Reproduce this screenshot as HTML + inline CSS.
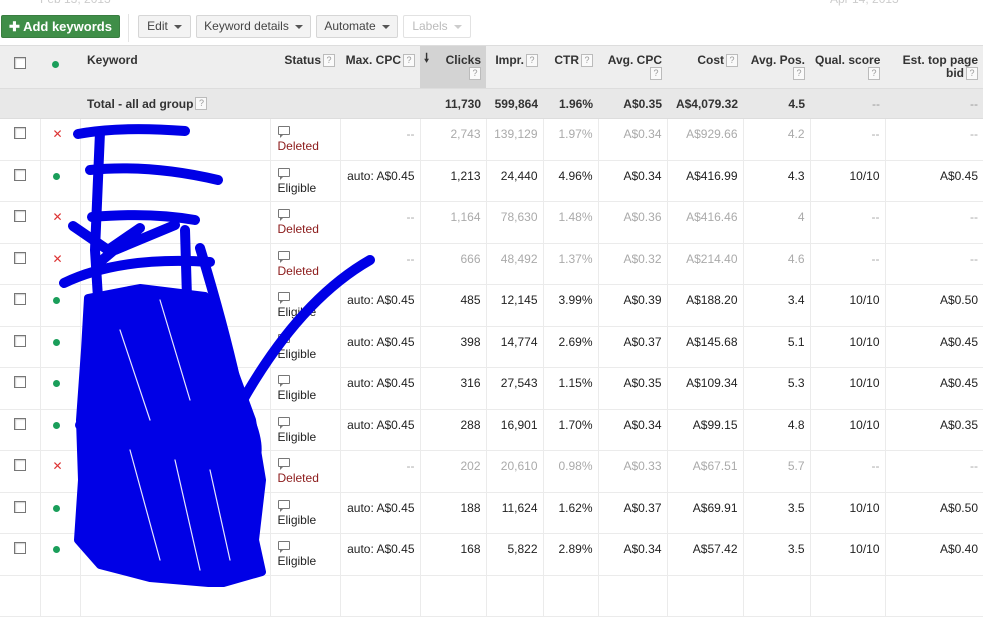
<!DOCTYPE html>
<html><head><meta charset="utf-8"><style>
body{margin:0;width:987px;height:587px;overflow:hidden;background:#fff;font-family:"Liberation Sans",Arial,sans-serif;font-size:12px;color:#222;position:relative}
.date{position:absolute;top:-8px;color:#ccc;font-size:12px}
.btn{position:absolute;top:15px;height:23px;border:1px solid #d6d6d6;border-radius:2px;background:#f3f3f3;line-height:21px;font-size:12px;color:#444;box-sizing:border-box;padding:0 10px;white-space:nowrap;text-align:center}
.caret{display:inline-block;width:0;height:0;border-left:4px solid transparent;border-right:4px solid transparent;border-top:4px solid #555;margin-left:6px;vertical-align:middle}
table{position:absolute;left:0;top:45px;border-collapse:collapse;table-layout:fixed;width:983px}
td,th{padding:0 5px;overflow:hidden;white-space:nowrap;box-sizing:border-box}
th{background:#eee;font-weight:bold;color:#333;vertical-align:top;padding-top:8px;height:43px;text-align:right;font-size:12px;line-height:13px;border-top:1px solid #ddd}
.q{display:inline-block;width:10px;height:11px;border:1px solid #bbb;background:#fafafa;color:#999;font-size:9px;line-height:11px;text-align:center;font-weight:normal;vertical-align:top;margin-left:2px}
tr.tot td{background:#e8e8e8;font-weight:bold;height:30px;text-align:right;border-top:1px solid #ddd;border-bottom:1px solid #ddd;color:#333}
tr.r td{height:41.5px;border-bottom:1px solid #ebebeb;border-left:1px solid #ebebeb;text-align:right;vertical-align:top;padding-top:8px}
tr.r td:first-child{border-left:none}
tr.d td{color:#aaa}
.cb{display:inline-block;width:10px;height:10px;border:1px solid #777;background:#fff;box-shadow:inset 1px 1px 1px #ccc}
.dot{display:inline-block;width:7px;height:7px;border-radius:50%;background:#1a9e5a}
.x{color:#d33;font-size:12px}
.st{text-align:left!important;padding-top:5px!important;line-height:15px;font-size:12px;padding-left:7px!important}
.bub{display:inline-block;width:10px;height:7px;border:1px solid #777;border-radius:1px;position:relative}
.bub:after{content:"";position:absolute;left:1px;bottom:-4px;width:0;height:0;border-left:3px solid #777;border-bottom:3px solid transparent}
.del{color:#8b1a1a}
.el{color:#222}
.c2{text-align:left!important;padding-left:12px!important}
</style></head><body>
<div class="date" style="left:40px">Feb 13, 2013</div>
<div class="date" style="left:830px">Apr 14, 2013</div>
<div class="btn" style="left:1px;width:119px;background:#3f8e48;border-color:#3a7d41;color:#fff;font-weight:bold;font-size:13px;padding:0">✚ Add keywords</div>
<div style="position:absolute;left:128px;top:14px;width:1px;height:28px;background:#e4e4e4"></div>
<div class="btn" style="left:138px;width:53px;padding:0">Edit<span class="caret"></span></div>
<div class="btn" style="left:196px;width:115px;padding:0">Keyword details<span class="caret"></span></div>
<div class="btn" style="left:316px;width:82px;padding:0">Automate<span class="caret"></span></div>
<div class="btn" style="left:403px;width:68px;background:#fff;color:#bbb;border-color:#e2e2e2;padding:0">Labels<span class="caret" style="border-top-color:#ccc"></span></div>
<table>
<colgroup><col style="width:40px"><col style="width:40px"><col style="width:190px"><col style="width:70px"><col style="width:80px"><col style="width:66px"><col style="width:57px"><col style="width:55px"><col style="width:69px"><col style="width:76px"><col style="width:67px"><col style="width:75px"><col style="width:98px"></colgroup>
<tr><th style="text-align:center;padding-top:11px"><span class="cb"></span></th><th class="c2" style="padding-top:12px"><span class="dot"></span></th><th style="text-align:left;padding-left:7px">Keyword</th><th>Status<span class="q">?</span></th><th>Max. CPC<span class="q">?</span></th><th style="background:#d3d3d3;position:relative"><span style="position:absolute;left:4px;top:6px">🠗</span>Clicks<br><span class="q">?</span></th><th>Impr.<span class="q">?</span></th><th>CTR<span class="q">?</span></th><th>Avg. CPC<br><span class="q">?</span></th><th>Cost<span class="q">?</span></th><th>Avg. Pos.<br><span class="q">?</span></th><th>Qual. score<br><span class="q">?</span></th><th>Est. top page<br>bid<span class="q">?</span></th></tr>
<tr class="tot"><td></td><td></td><td style="text-align:left;padding-left:7px">Total - all ad group<span class="q">?</span></td><td></td><td></td><td>11,730</td><td>599,864</td><td>1.96%</td><td>A$0.35</td><td>A$4,079.32</td><td>4.5</td><td style="font-weight:normal;color:#999">--</td><td style="font-weight:normal;color:#999">--</td></tr>
<tr class="r d"><td style="text-align:center"><span class="cb"></span></td><td class="c2"><span class="x">✕</span></td><td></td><td class="st"><span class="bub"></span><br><span class="del">Deleted</span></td><td>--</td><td>2,743</td><td>139,129</td><td>1.97%</td><td>A$0.34</td><td>A$929.66</td><td>4.2</td><td>--</td><td>--</td></tr>
<tr class="r"><td style="text-align:center"><span class="cb"></span></td><td class="c2"><span class="dot"></span></td><td></td><td class="st"><span class="bub"></span><br><span class="el">Eligible</span></td><td>auto: A$0.45</td><td>1,213</td><td>24,440</td><td>4.96%</td><td>A$0.34</td><td>A$416.99</td><td>4.3</td><td>10/10</td><td>A$0.45</td></tr>
<tr class="r d"><td style="text-align:center"><span class="cb"></span></td><td class="c2"><span class="x">✕</span></td><td></td><td class="st"><span class="bub"></span><br><span class="del">Deleted</span></td><td>--</td><td>1,164</td><td>78,630</td><td>1.48%</td><td>A$0.36</td><td>A$416.46</td><td>4</td><td>--</td><td>--</td></tr>
<tr class="r d"><td style="text-align:center"><span class="cb"></span></td><td class="c2"><span class="x">✕</span></td><td></td><td class="st"><span class="bub"></span><br><span class="del">Deleted</span></td><td>--</td><td>666</td><td>48,492</td><td>1.37%</td><td>A$0.32</td><td>A$214.40</td><td>4.6</td><td>--</td><td>--</td></tr>
<tr class="r"><td style="text-align:center"><span class="cb"></span></td><td class="c2"><span class="dot"></span></td><td></td><td class="st"><span class="bub"></span><br><span class="el">Eligible</span></td><td>auto: A$0.45</td><td>485</td><td>12,145</td><td>3.99%</td><td>A$0.39</td><td>A$188.20</td><td>3.4</td><td>10/10</td><td>A$0.50</td></tr>
<tr class="r"><td style="text-align:center"><span class="cb"></span></td><td class="c2"><span class="dot"></span></td><td></td><td class="st"><span class="bub"></span><br><span class="el">Eligible</span></td><td>auto: A$0.45</td><td>398</td><td>14,774</td><td>2.69%</td><td>A$0.37</td><td>A$145.68</td><td>5.1</td><td>10/10</td><td>A$0.45</td></tr>
<tr class="r"><td style="text-align:center"><span class="cb"></span></td><td class="c2"><span class="dot"></span></td><td></td><td class="st"><span class="bub"></span><br><span class="el">Eligible</span></td><td>auto: A$0.45</td><td>316</td><td>27,543</td><td>1.15%</td><td>A$0.35</td><td>A$109.34</td><td>5.3</td><td>10/10</td><td>A$0.45</td></tr>
<tr class="r"><td style="text-align:center"><span class="cb"></span></td><td class="c2"><span class="dot"></span></td><td></td><td class="st"><span class="bub"></span><br><span class="el">Eligible</span></td><td>auto: A$0.45</td><td>288</td><td>16,901</td><td>1.70%</td><td>A$0.34</td><td>A$99.15</td><td>4.8</td><td>10/10</td><td>A$0.35</td></tr>
<tr class="r d"><td style="text-align:center"><span class="cb"></span></td><td class="c2"><span class="x">✕</span></td><td></td><td class="st"><span class="bub"></span><br><span class="del">Deleted</span></td><td>--</td><td>202</td><td>20,610</td><td>0.98%</td><td>A$0.33</td><td>A$67.51</td><td>5.7</td><td>--</td><td>--</td></tr>
<tr class="r"><td style="text-align:center"><span class="cb"></span></td><td class="c2"><span class="dot"></span></td><td></td><td class="st"><span class="bub"></span><br><span class="el">Eligible</span></td><td>auto: A$0.45</td><td>188</td><td>11,624</td><td>1.62%</td><td>A$0.37</td><td>A$69.91</td><td>3.5</td><td>10/10</td><td>A$0.50</td></tr>
<tr class="r"><td style="text-align:center"><span class="cb"></span></td><td class="c2"><span class="dot"></span></td><td></td><td class="st"><span class="bub"></span><br><span class="el">Eligible</span></td><td>auto: A$0.45</td><td>168</td><td>5,822</td><td>2.89%</td><td>A$0.34</td><td>A$57.42</td><td>3.5</td><td>10/10</td><td>A$0.40</td></tr>
<tr class="r"><td></td><td></td><td></td><td></td><td></td><td></td><td></td><td></td><td></td><td></td><td></td><td></td><td></td></tr>
</table>
<svg style="position:absolute;left:0;top:0" width="987" height="587" fill="none" stroke="#0000e6" stroke-linecap="round" stroke-linejoin="round">
<g stroke-width="10">
<path d="M78 134 Q120 126 185 131"/>
<path d="M100 132 L95 250 L100 330"/>
<path d="M90 170 Q150 164 218 180"/>
<path d="M92 217 Q150 212 195 220"/>
<path d="M73 226 L108 250 L140 228 L100 262 M115 250 L175 225"/>
<path d="M64 283 Q120 256 210 262"/>
<path d="M185 230 L190 400"/>
<path d="M200 248 Q225 330 240 400 Q262 440 255 460 Q230 455 215 440"/>
<path d="M243 400 Q300 300 370 260"/>
<path d="M80 425 L240 425"/>
</g>
<path fill="#0000e6" stroke="#0000e6" stroke-width="8" d="M88 298 L140 288 L205 296 L230 360 L252 420 L262 480 L255 540 L262 572 L220 584 L150 578 L100 565 L78 540 L82 480 L80 420 L85 350 Z"/>
<g stroke="#fff" stroke-width="1.2" opacity="0.9">
<path d="M120 330 L150 420 M160 300 L190 400 M130 450 L160 560 M175 460 L200 570 M210 470 L230 560"/>
</g>
</svg>
</body></html>
